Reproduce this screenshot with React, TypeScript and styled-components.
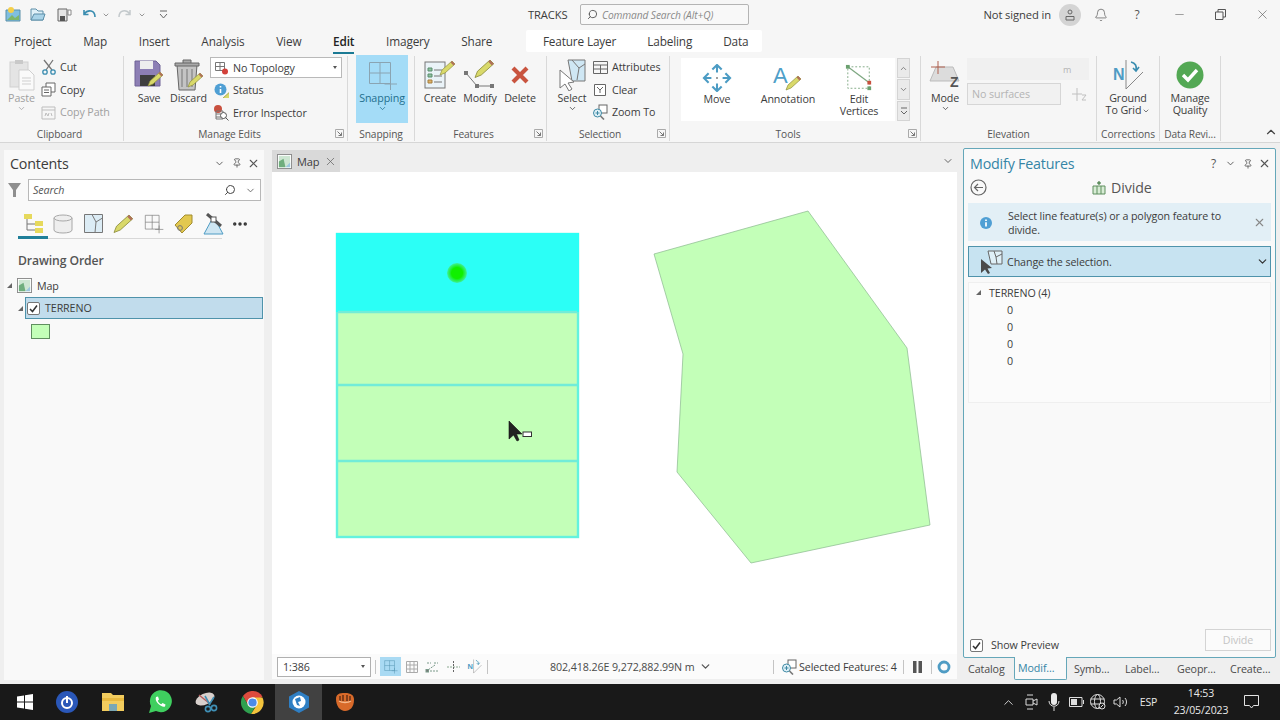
import React from "react"
import styled, { createGlobalStyle } from "styled-components"
import { ChevronDown, ChevronUp, X, Minus, Search, Bell, Pin, MoreHorizontal } from "lucide-react"

const GlobalStyle = createGlobalStyle`
  html, body { margin: 0; padding: 0; height: 100%; overflow: hidden; }
  body { font-family: "Open Sans", "Liberation Sans", sans-serif; color: #3c3c3c; }
  * { box-sizing: border-box; }
`

const Page = styled.div`
  width: 1280px;
  height: 720px;
  display: flex;
  flex-direction: column;
  background: #eeeeee;
  font-size: 10.7px;
  letter-spacing: -0.1px;
`

/* title bar */
const TitleBar = styled.div`
  height: 29px;
  flex: none;
  display: flex;
  align-items: center;
  background: #f6f6f6;
`
const Qat = styled.div`
  width: 528px;
  flex: none;
  display: flex;
  align-items: center;
  padding-left: 4px;
`
const QatButton = styled.span<{ $w?: number; $ml?: number }>`
  width: ${(p) => p.$w ?? 26}px;
  margin-left: ${(p) => p.$ml ?? 0}px;
  flex: none;
  display: flex;
  justify-content: center;
  align-items: center;
`
const AppName = styled.span`
  width: 52px;
  flex: none;
  font-size: 11.2px;
`
const CommandSearch = styled.div`
  width: 169px;
  height: 21px;
  flex: none;
  display: flex;
  align-items: center;
  gap: 4px;
  padding-left: 6px;
  border: 1px solid #b4b4b4;
  border-radius: 2px;
  background: #f8f8f8;
  font-size: 10.2px;
  font-style: italic;
  color: #8a8a8a;
`
const MirrorSearch = styled(Search)`
  transform: scaleX(-1);
  flex: none;
`
const SignIn = styled.span`
  margin-left: auto;
  font-size: 11.2px;
`
const Avatar = styled.span`
  width: 22px;
  height: 22px;
  flex: none;
  margin: 0 9px 0 8px;
  border-radius: 50%;
  background: #d4d4d4;
  display: flex;
  align-items: center;
  justify-content: center;
`
const TitleIcon = styled.span<{ $w: number }>`
  width: ${(p) => p.$w}px;
  flex: none;
  display: flex;
  justify-content: center;
  color: #555;
  font-size: 12px;
`

/* tabs */
const TabRow = styled.div`
  height: 26px;
  flex: none;
  display: flex;
  align-items: flex-end;
  padding: 0 0 4px 14px;
  gap: 31.7px;
  background: #f6f6f6;
  font-size: 11.8px;
  letter-spacing: -0.15px;
`
const MainTab = styled.span<{ $active?: boolean }>`
  position: relative;
  line-height: 20px;
  color: ${(p) => (p.$active ? "#222" : "#3c3c3c")};
  font-weight: ${(p) => (p.$active ? 600 : 400)};
  &::after {
    content: "";
    display: ${(p) => (p.$active ? "block" : "none")};
    position: absolute;
    left: 0;
    right: 0;
    bottom: -3px;
    height: 2.5px;
    background: #1b7a94;
  }
`
const ContextTabs = styled.div`
  height: 22px;
  margin: 0 0 -1px 2px;
  padding: 0 14px 0 17px;
  display: flex;
  align-items: center;
  gap: 31px;
  background: #ffffff;
  border-radius: 2px;
`

/* ribbon */
const Ribbon = styled.div`
  height: 88px;
  flex: none;
  display: flex;
  background: #f6f6f6;
  border-bottom: 1px solid #d6d6d6;
  position: relative;
`
const Group = styled.div<{ $w: number; $last?: boolean }>`
  width: ${(p) => p.$w}px;
  flex: none;
  display: flex;
  flex-direction: column;
  border-right: ${(p) => (p.$last ? "none" : "1px solid #d9d9d9")};
  margin: 1px 0 1px;
  position: relative;
`
const GroupBody = styled.div<{ $pad?: number }>`
  height: 70px;
  flex: none;
  display: flex;
  padding-left: ${(p) => p.$pad ?? 0}px;
`
const GroupLabel = styled.div<{ $pr?: number }>`
  flex: 1;
  display: flex;
  align-items: center;
  justify-content: center;
  padding-right: ${(p) => p.$pr ?? 0}px;
  font-size: 10.2px;
  color: #555;
`
const Launcher = styled.svg`
  position: absolute;
  right: 3px;
  bottom: 3px;
`
const LargeButton = styled.div<{ $w: number; $on?: boolean; $off?: boolean }>`
  width: ${(p) => p.$w}px;
  height: 68px;
  flex: none;
  display: flex;
  flex-direction: column;
  align-items: center;
  margin-top: ${(p) => (p.$on ? -1 : 0)}px;
  padding-top: ${(p) => (p.$on ? 3 : 2)}px;
  background: ${(p) => (p.$on ? "#a4dcf7" : "transparent")};
  color: ${(p) => (p.$off ? "#a0a0a0" : p.$on ? "#1f6f8e" : "#3c3c3c")};
  line-height: 12px;
  text-align: center;
`
const LargeIcon = styled.div`
  height: 33px;
  flex: none;
  display: flex;
  align-items: center;
  justify-content: center;
  margin-bottom: 1px;
`
const Stack = styled.div<{ $w: number; $ml?: number; $pt?: number }>`
  width: ${(p) => p.$w}px;
  margin-left: ${(p) => p.$ml ?? 0}px;
  padding-top: ${(p) => p.$pt ?? 0}px;
  flex: none;
  display: flex;
  flex-direction: column;
`
const SmallRow = styled.div<{ $off?: boolean; $pl?: number }>`
  height: 22.5px;
  display: flex;
  align-items: center;
  gap: 4px;
  padding-left: ${(p) => p.$pl ?? 0}px;
  color: ${(p) => (p.$off ? "#a0a0a0" : "#3c3c3c")};
  white-space: nowrap;
`
const IconSlot = styled.span`
  width: 16px;
  height: 16px;
  flex: none;
  display: flex;
  align-items: center;
  justify-content: center;
`
const Combo = styled.div`
  width: 132px;
  height: 21px;
  display: flex;
  align-items: center;
  gap: 4px;
  padding: 0 4px 0 3px;
  margin-bottom: 1px;
  background: #ffffff;
  border: 1px solid #b9b9b9;
`
const Caret = styled.span`
  margin-left: auto;
  width: 0;
  height: 0;
  border-left: 2.5px solid transparent;
  border-right: 2.5px solid transparent;
  border-top: 3px solid #555;
`
const Gallery = styled.div`
  width: 214px;
  height: 63px;
  margin: 2px 0 0 11px;
  flex: none;
  display: flex;
  background: #ffffff;
`
const GalleryItem = styled.div<{ $w: number }>`
  width: ${(p) => p.$w}px;
  flex: none;
  display: flex;
  flex-direction: column;
  align-items: center;
  padding-top: 5px;
  line-height: 11.5px;
  text-align: center;
  color: #3c3c3c;
`
const GalleryIcon = styled.div`
  height: 30px;
  flex: none;
  display: flex;
  align-items: center;
  justify-content: center;
  margin-bottom: 1px;
`
const GalleryScroll = styled.div`
  width: 13px;
  height: 63px;
  margin: 2px 0 0 2px;
  flex: none;
  display: flex;
  flex-direction: column;
  gap: 1px;
`
const ScrollStep = styled.div`
  flex: 1;
  display: flex;
  align-items: center;
  justify-content: center;
  background: #eaeaea;
  border: 1px solid #d4d4d4;
  color: #666;
`
const ElevationInputs = styled.div`
  margin-left: 2px;
  display: flex;
  flex-direction: column;
  gap: 3px;
  padding-top: 2px;
`
const DisabledInput = styled.div<{ $w: number; $border?: boolean }>`
  width: ${(p) => p.$w}px;
  height: 22px;
  display: flex;
  align-items: center;
  padding-left: 4px;
  background: ${(p) => (p.$border ? "#f1f1f1" : "#f0f0f0")};
  border: ${(p) => (p.$border ? "1px solid #d6d6d6" : "none")};
  color: #b4b4b4;
`
const UnitText = styled.span`
  margin-left: 92px;
  font-size: 9px;
`
const ElevRow = styled.div`
  display: flex;
  align-items: center;
  gap: 11px;
`
const InlineChevron = styled(ChevronDown)`
  vertical-align: -1px;
  margin-left: 1px;
`
const Collapse = styled.span`
  position: absolute;
  right: 2px;
  bottom: 0px;
  color: #444;
`

/* body */
const Main = styled.div`
  flex: 1;
  min-height: 0;
  display: flex;
  padding: 6px 4px 4px 4px;
  background: #efefef;
`
const ContentsPane = styled.div`
  width: 260px;
  margin-top: 1px;
  flex: none;
  display: flex;
  flex-direction: column;
  background: #f9f9f9;
`
const PaneHead = styled.div`
  height: 26px;
  flex: none;
  display: flex;
  align-items: center;
  padding: 3px 2px 0 6px;
`
const ContentsHead = styled(PaneHead)`
  height: 25px;
  padding-top: 1px;
`
const PaneTitle = styled.span<{ $blue?: boolean }>`
  flex: 1;
  font-size: 14.3px;
  letter-spacing: -0.2px;
  color: ${(p) => (p.$blue ? "#3585a6" : "#3c3c3c")};
`
const HeadIcon = styled.span`
  width: 17px;
  flex: none;
  display: flex;
  justify-content: center;
  color: #555;
  font-size: 12px;
`
const SearchRow = styled.div`
  display: flex;
  align-items: center;
  padding: 4px 3px 0 3px;
  gap: 6px;
`
const SearchBox = styled.div`
  flex: 1;
  height: 22px;
  display: flex;
  align-items: center;
  padding: 0 4px;
  background: #fff;
  border: 1px solid #b8b8b8;
  font-style: italic;
  color: #555;
`
const SearchText = styled.span`
  flex: 1;
`
const SearchChevron = styled(ChevronDown)`
  margin-left: 9px;
`
const ViewTabs = styled.div`
  margin: 8px 0 0 14px;
  width: 204px;
  height: 30px;
  flex: none;
  display: flex;
  align-items: center;
  border-bottom: 1px solid #d8d8d8;
  position: relative;
  &::after {
    content: "";
    position: absolute;
    left: 0;
    bottom: -1px;
    width: 30px;
    height: 3px;
    background: #1f7f99;
  }
`
const ViewTab = styled.span<{ $w?: number }>`
  width: ${(p) => p.$w ?? 30}px;
  flex: none;
  display: flex;
  justify-content: center;
`
const SectionTitle = styled.div`
  margin: 13px 0 0 14px;
  font-size: 12.2px;
  font-weight: 600;
  color: #555;
`
const LayerBox = styled.div`
  flex: 1;
  height: 22px;
  display: flex;
  align-items: center;
  gap: 5px;
  padding-left: 1px;
  background: #c1dcec;
  border: 1px solid #4f93ab;
`
const TreeArrow = styled.span`
  width: 0;
  height: 0;
  flex: none;
  border-left: 5px solid transparent;
  border-bottom: 5px solid #666;
`
const MapTreeRow = styled.div`
  display: flex;
  align-items: center;
  margin-top: 9px;
  padding-left: 3px;
  gap: 5px;
`
const LayerRow = styled.div`
  display: flex;
  align-items: center;
  padding: 0 1px 0 14px;
  gap: 2px;
  margin-top: 4px;
`
const Check = styled.span`
  width: 13px;
  height: 13px;
  flex: none;
  display: flex;
  align-items: center;
  justify-content: center;
  background: #fff;
  border: 1px solid #777;
  border-radius: 2px;
`
const Swatch = styled.div`
  width: 19px;
  height: 15px;
  margin: 5px 0 0 27px;
  background: #c3ffb8;
  border: 1px solid #5f8f5f;
`

const MapPane = styled.div`
  width: 685px;
  margin: 1px 0 0 8px;
  flex: none;
  display: flex;
  flex-direction: column;
`
const MapTabs = styled.div`
  height: 22px;
  flex: none;
  display: flex;
  align-items: center;
  justify-content: space-between;
  padding-right: 3px;
`
const MapTab = styled.div`
  height: 22px;
  padding: 0 3px 0 5px;
  display: flex;
  align-items: center;
  gap: 5px;
  background: #d9d9d9;
  font-size: 11px;
`
const Canvas = styled.div`
  height: 482px;
  flex: none;
  background: #ffffff;
  display: flex;
`
const StatusBar = styled.div`
  height: 25px;
  flex: none;
  display: flex;
  align-items: center;
  padding-left: 5px;
  background: #fbfbfb;
`
const ScaleBox = styled.div`
  width: 94px;
  height: 20px;
  flex: none;
  display: flex;
  align-items: center;
  padding: 0 5px;
  background: #fff;
  border: 1px solid #b0b0b0;
`
const Sep = styled.span<{ $l: number; $r: number }>`
  width: 1px;
  height: 14px;
  flex: none;
  margin: 0 ${(p) => p.$r}px 0 ${(p) => p.$l}px;
  background: #c4c4c4;
`
const StatusIcon = styled.span<{ $on?: boolean }>`
  width: 21px;
  height: 19px;
  flex: none;
  display: flex;
  align-items: center;
  justify-content: center;
  background: ${(p) => (p.$on ? "#a9daf3" : "transparent")};
`
const Coords = styled.span`
  margin-left: 60px;
  width: 141px;
  flex: none;
  white-space: nowrap;
  color: #4a4a4a;
`
const CoordChevron = styled(ChevronDown)`
  margin-left: 8px;
  flex: none;
`
const SelectedText = styled.span`
  width: 99px;
  margin-left: 2px;
  flex: none;
  white-space: nowrap;
`

const ModifyColumn = styled.div`
  width: 313px;
  margin: -1px 0 0 6px;
  flex: none;
  display: flex;
  flex-direction: column;
`
const ModifyPane = styled.div`
  height: 510px;
  flex: none;
  display: flex;
  flex-direction: column;
  background: #f9f9f9;
  border: 1px solid #65a7b9;
  border-radius: 2px;
`
const BackRow = styled.div`
  height: 23px;
  flex: none;
  display: flex;
  align-items: center;
  padding: 2px 0 0 6px;
`
const DivideTitle = styled.div`
  margin-left: 105px;
  display: flex;
  align-items: center;
  gap: 5px;
  font-size: 14.2px;
  color: #555;
`
const InfoBar = styled.div`
  margin: 5px 4px 0 4px;
  height: 38px;
  flex: none;
  display: flex;
  align-items: center;
  padding: 1px 5px 0 12px;
  background: #e2eff6;
  line-height: 14px;
`
const InfoText = styled.span`
  width: 235px;
  margin-left: 16px;
  flex: none;
`
const InfoClose = styled.span`
  margin-left: auto;
  color: #888;
  display: flex;
`
const SelectBar = styled.div`
  margin: 5px 4px 0 4px;
  height: 31px;
  flex: none;
  display: flex;
  align-items: center;
  padding: 0 1px 0 10px;
  gap: 4px;
  background: #c7e3f1;
  border: 1px solid #4f93ab;
`
const SelectText = styled.span`
  flex: 1;
`
const FeatureList = styled.div`
  margin: 5px 4px 0 4px;
  height: 121px;
  flex: none;
  padding: 1px 0 0 7px;
  background: #fbfbfb;
  border: 1px solid #efefef;
`
const ListRow = styled.div<{ $child?: boolean }>`
  height: 17px;
  display: flex;
  align-items: center;
  gap: 8px;
  padding-left: ${(p) => (p.$child ? 31 : 0)}px;
`
const Footer = styled.div`
  margin-top: auto;
  height: 28px;
  flex: none;
  display: flex;
  align-items: flex-start;
  padding: 0 4px 0 6px;
`
const PreviewRow = styled.div`
  margin-top: 9px;
  display: flex;
  align-items: center;
  gap: 8px;
`
const DivideButton = styled.div`
  margin-left: auto;
  width: 66px;
  height: 22px;
  display: flex;
  align-items: center;
  justify-content: center;
  background: #fbfbfb;
  border: 1px solid #d4d4d4;
  color: #c4c4c4;
`
const DockTabs = styled.div`
  height: 22px;
  flex: none;
  display: flex;
  align-items: stretch;
  padding-left: 5px;
`
const DockTab = styled.span<{ $w: number; $active?: boolean; $pl?: number }>`
  width: ${(p) => p.$w}px;
  flex: none;
  display: flex;
  align-items: center;
  color: ${(p) => (p.$active ? "#3585a6" : "#4a4a4a")};
  padding-left: ${(p) => p.$pl ?? 0}px;
  margin-top: -1px;
  background: ${(p) => (p.$active ? "#f9f9f9" : "transparent")};
  border: ${(p) => (p.$active ? "1px solid #65a7b9" : "none")};
  border-top: none;
  border-radius: 0 0 2px 2px;
`

/* taskbar */
const Taskbar = styled.div`
  height: 36px;
  flex: none;
  display: flex;
  align-items: stretch;
  background: #191919;
  color: #e8e8e8;
`
const StartButton = styled.div`
  width: 44px;
  flex: none;
  display: flex;
  align-items: center;
  justify-content: center;
  padding-left: 6px;
`
const TaskIcon = styled.div<{ $active?: boolean }>`
  width: 46.3px;
  flex: none;
  display: flex;
  align-items: center;
  justify-content: center;
  background: ${(p) => (p.$active ? "#414141" : "transparent")};
`
const Tray = styled.div`
  margin-left: auto;
  display: flex;
  align-items: center;
`
const TrayIcon = styled.span`
  width: 22.4px;
  flex: none;
  display: flex;
  justify-content: center;
  color: #e4e4e4;
`
const Lang = styled.span`
  width: 33px;
  text-align: center;
  font-size: 10.5px;
`
const Clock = styled.div`
  width: 70px;
  margin-left: 1px;
  text-align: center;
  font-size: 10.5px;
  line-height: 17px;
`
const NotifyIcon = styled.span`
  width: 44px;
  display: flex;
  justify-content: center;
  padding-right: 14px;
`

/* small drawings */
const Pencil = ({ x = 0, y = 0 }: { x?: number; y?: number }) => (
  <g transform={`translate(${x} ${y})`}>
    <path d="M0 14 L2 9 L12 0 L15 3 L5 12 Z" fill="#d9d96a" stroke="#8f8f3e" strokeWidth=".7" />
    <path d="M12 0 L15 3 L13.5 4.4 L10.6 1.4 Z" fill="#b0705a" />
  </g>
)
const MapGlyph = ({ s = 16 }: { s?: number }) => (
  <svg width={s} height={s} viewBox="0 0 16 16">
    <rect x=".5" y=".5" width="15" height="15" fill="#fff" stroke="#8a8a8a" />
    <rect x="2" y="2" width="12" height="12" fill="#cde6d2" />
    <path d="M2 8 L7 5 L9 14 H2 Z" fill="#6fae7d" />
    <path d="M9 14 L14 9 V14 Z" fill="#9cc7de" />
  </svg>
)
const SelectGlyph = () => (
  <svg width="30" height="32" viewBox="0 0 30 32">
    <path d="M11 1 H28 V22 H15 Z" fill="#cfe7f4" stroke="#777" />
    <path d="M15 1 L22 9 L20 21 M28 5 L22 9" fill="none" stroke="#777" />
    <path d="M3 11 L3 29 L8 25 L12 32 L15 30 L11 24 L17 23 Z" fill="#fff" stroke="#777" />
  </svg>
)
const ZoomToGlyph = () => (
  <svg width="16" height="16" viewBox="0 0 16 16">
    <rect x="7" y="1" width="8" height="8" fill="#fff" stroke="#666" />
    <circle cx="5.5" cy="9" r="4" fill="#dff0f7" stroke="#3f8aa5" />
    <path d="M3.5 9 H7.5 M5.5 7 V11" stroke="#3f8aa5" />
    <path d="M8.5 12 L12 15.5" stroke="#777" strokeWidth="1.6" />
  </svg>
)
const SnapGlyph = ({ s = 32, c = "#8aa4b2" }: { s?: number; c?: string }) => (
  <svg width={s} height={s} viewBox="0 0 32 32" fill="none" stroke={c} strokeWidth="1">
    <path d="M3.5 3.5 H24.5 V24.5 H3.5 Z M14 3.5 V24.5 M3.5 14 H24.5" />
    <path d="M24.5 19 V31 M18.5 25 H31" />
  </svg>
)
const GroundGlyph = ({ s = 32 }: { s?: number }) => (
  <svg width={s} height={s} viewBox="0 0 32 32" fill="none">
    <path d="M14 1 V30 L31 13" stroke="#888" />
    <text x="1" y="21" fontFamily="Liberation Sans, sans-serif" fontWeight="700" fontSize="16" fill="#4f9cc4">N</text>
    <path d="M19 3 C23 4 25 7 24 11 M21 9 L24 12 L27 8" stroke="#3a8db0" strokeWidth="1.6" />
  </svg>
)
const Check2 = () => (
  <svg width="9" height="9" viewBox="0 0 9 9">
    <path d="M1 5 L3.5 7.5 L8 1.5" stroke="#333" strokeWidth="1.5" fill="none" />
  </svg>
)
const Launch = () => (
  <Launcher width="9" height="9" viewBox="0 0 9 9" fill="none" stroke="#777">
    <path d="M.5 8.5 V.5 H8.5 V8.5 Z" stroke="#aaa" />
    <path d="M2.5 2.5 L6.5 6.5 M6.5 3.5 V6.5 H3.5" />
  </Launcher>
)

const App = () => (
  <Page>
    <GlobalStyle />
    <TitleBar>
      <Qat>
        <QatButton $w={17}>
          <svg width="16" height="15" viewBox="0 0 16 15">
            <path d="M1 3 H15 V14 H1 Z" fill="#7fbfe0" stroke="#5a8fa8" />
            <path d="M2 13 L7 8 L10 11 L14 8 V13 Z" fill="#7eb76a" />
            <circle cx="6" cy="3" r="3" fill="#f4cf4a" />
          </svg>
        </QatButton>
        <QatButton $w={26} $ml={4}>
          <svg width="16" height="13" viewBox="0 0 16 13">
            <path d="M1 12 V1 H6 L8 3 H13 V12 Z" fill="#dff0f8" stroke="#5c8ea8" />
            <path d="M1 12 L4 6 H15 L13 12 Z" fill="#a9d3e8" stroke="#5c8ea8" />
          </svg>
        </QatButton>
        <QatButton $w={26}>
          <svg width="15" height="14" viewBox="0 0 15 14">
            <path d="M1 1 H10 V13 H1 Z" fill="#e6e6e6" stroke="#666" />
            <rect x="3" y="8" width="5" height="5" fill="#555" />
            <path d="M11 2 H14 V7 H11 Z" fill="#fff" stroke="#888" />
          </svg>
        </QatButton>
        <QatButton $w={25}>
          <svg width="14" height="12" viewBox="0 0 14 12" fill="none" stroke="#3a8db0" strokeWidth="1.6">
            <path d="M1 5 C5 0 12 1 12 8 M1 1 V5.5 H5.5" />
          </svg>
        </QatButton>
        <QatButton $w={8}><ChevronDown size={8} color="#666" /></QatButton>
        <QatButton $w={28}>
          <svg width="14" height="12" viewBox="0 0 14 12" fill="none" stroke="#c3c9cc" strokeWidth="1.5">
            <path d="M13 5 C9 0 2 1 2 8 M13 1 V5.5 H8.5" />
          </svg>
        </QatButton>
        <QatButton $w={8}><ChevronDown size={8} color="#666" /></QatButton>
        <QatButton $w={34}>
          <svg width="9" height="9" viewBox="0 0 9 9" fill="none" stroke="#666">
            <path d="M1 1 H8 M1 4 L4.5 8 L8 4" />
          </svg>
        </QatButton>
      </Qat>
      <AppName>TRACKS</AppName>
      <CommandSearch>
        <MirrorSearch size={11} color="#555" />
        Command Search (Alt+Q)
      </CommandSearch>
      <SignIn>Not signed in</SignIn>
      <Avatar>
        <svg width="10" height="12" viewBox="0 0 10 12" fill="none" stroke="#666">
          <circle cx="5" cy="3" r="2" />
          <path d="M1 11 V7.5 H9 V11 Z" />
        </svg>
      </Avatar>
      <TitleIcon $w={22}><Bell size={14} strokeWidth={1.2} /></TitleIcon>
      <TitleIcon $w={50}>?</TitleIcon>
      <TitleIcon $w={34}><Minus size={13} strokeWidth={1} /></TitleIcon>
      <TitleIcon $w={48}>
        <svg width="11" height="11" viewBox="0 0 11 11" fill="none" stroke="#555">
          <path d="M.5 3 H8 V10.5 H.5 Z M3 3 V.5 H10.5 V8 H8" />
        </svg>
      </TitleIcon>
      <TitleIcon $w={36}><X size={15} strokeWidth={1} /></TitleIcon>
    </TitleBar>

    <TabRow>
      <MainTab>Project</MainTab>
      <MainTab>Map</MainTab>
      <MainTab>Insert</MainTab>
      <MainTab>Analysis</MainTab>
      <MainTab>View</MainTab>
      <MainTab $active>Edit</MainTab>
      <MainTab>Imagery</MainTab>
      <MainTab>Share</MainTab>
      <ContextTabs>
        <MainTab>Feature Layer</MainTab>
        <MainTab>Labeling</MainTab>
        <MainTab>Data</MainTab>
      </ContextTabs>
    </TabRow>

    <Ribbon>
      <Group $w={124}>
        <GroupBody $pad={3}>
          <LargeButton $w={37} $off>
            <LargeIcon>
              <svg width="26" height="32" viewBox="0 0 26 32">
                <rect x="1" y="3" width="18" height="25" fill="#e4e4e4" stroke="#d0d0d0" />
                <rect x="6" y="1" width="8" height="4" fill="#c9c9c9" />
                <path d="M10 11 H20 L25 16 V31 H10 Z" fill="#fafafa" stroke="#cfcfcf" />
                <path d="M13 19 H22 M13 22 H22 M13 25 H22" stroke="#cfcfcf" />
              </svg>
            </LargeIcon>
            Paste
            <ChevronDown size={9} />
          </LargeButton>
          <Stack $w={80}>
            <SmallRow>
              <IconSlot>
                <svg width="15" height="16" viewBox="0 0 15 16" fill="none">
                  <path d="M3 1 L11 11 M12 1 L5 11" stroke="#777" strokeWidth="1.3" />
                  <circle cx="4" cy="13" r="2.2" stroke="#3b8db0" strokeWidth="1.3" />
                  <circle cx="12" cy="13" r="2.2" stroke="#3b8db0" strokeWidth="1.3" />
                </svg>
              </IconSlot>
              Cut
            </SmallRow>
            <SmallRow>
              <IconSlot>
                <svg width="15" height="15" viewBox="0 0 15 15" fill="#fff" stroke="#666">
                  <path d="M5 1 H14 V10 H5 Z" />
                  <path d="M1 5 H10 V14 H1 Z" />
                  <path d="M3 8 H8 M3 10.5 H8" />
                </svg>
              </IconSlot>
              Copy
            </SmallRow>
            <SmallRow $off>
              <IconSlot>
                <svg width="15" height="15" viewBox="0 0 15 15" fill="none" stroke="#bdbdbd">
                  <path d="M1 2 H14 V14 H1 Z M1 5 H14" />
                  <path d="M4 11 L5 8 L7 11 L8 8 M10 8 L11 11" />
                </svg>
              </IconSlot>
              Copy Path
            </SmallRow>
          </Stack>
        </GroupBody>
        <GroupLabel $pr={4}>Clipboard</GroupLabel>
      </Group>

      <Group $w={224}>
        <GroupBody $pad={6}>
          <LargeButton $w={38}>
            <LargeIcon>
              <svg width="30" height="30" viewBox="0 0 30 30">
                <path d="M1 1 H22 L26 5 V26 H1 Z" fill="#8d7fb5" stroke="#6f6396" />
                <rect x="6" y="1" width="13" height="8" fill="#eeeeee" />
                <rect x="6" y="15" width="15" height="11" fill="#3f3f3f" />
                <Pencil x={14} y={12} />
              </svg>
            </LargeIcon>
            Save
          </LargeButton>
          <LargeButton $w={41}>
            <LargeIcon>
              <svg width="30" height="32" viewBox="0 0 30 32">
                <path d="M3 6 H23 L21 31 H5 Z" fill="#c4c4c4" stroke="#666" />
                <path d="M1 4 H25 V7 H1 Z M9 4 V1 H17 V4" fill="#a9a9a9" stroke="#666" />
                <path d="M8 10 V28 M13 10 V28 M18 10 V28" stroke="#777" />
                <Pencil x={14} y={14} />
              </svg>
            </LargeIcon>
            Discard
          </LargeButton>
          <Stack $w={136} $ml={1} $pt={1}>
            <Combo>
              <svg width="15" height="14" viewBox="0 0 15 14" fill="none">
                <path d="M1.5 1.5 H10.5 V9.5 H1.5 Z M6 1.5 V9.5 M1.5 5.5 H10.5" stroke="#777" />
                <circle cx="11" cy="10.5" r="3" fill="#d3413a" />
              </svg>
              No Topology
              <Caret />
            </Combo>
            <SmallRow $pl={3}>
              <IconSlot>
                <svg width="15" height="15" viewBox="0 0 15 15">
                  <circle cx="6.5" cy="6.5" r="6" fill="#4f9fd4" />
                  <path d="M6.5 3 V4.5 M6.5 6 V10" stroke="#fff" strokeWidth="1.6" />
                  <Pencil x={7} y={6} />
                </svg>
              </IconSlot>
              Status
            </SmallRow>
            <SmallRow $pl={3}>
              <IconSlot>
                <svg width="16" height="16" viewBox="0 0 16 16" fill="none">
                  <circle cx="5" cy="4" r="4" fill="#c8503e" />
                  <path d="M3 6 H10 V14 H3 Z M3 9 H10 M3 12 H8" stroke="#777" />
                  <circle cx="10.5" cy="10.5" r="3" fill="#fff" stroke="#555" />
                  <path d="M12.5 12.5 L15.5 15.5" stroke="#555" />
                </svg>
              </IconSlot>
              Error Inspector
            </SmallRow>
          </Stack>
        </GroupBody>
        <GroupLabel $pr={12}>Manage Edits</GroupLabel>
        <Launch />
      </Group>

      <Group $w={67}>
        <GroupBody $pad={8}>
          <LargeButton $w={52} $on>
            <LargeIcon>
              <SnapGlyph />
            </LargeIcon>
            Snapping
            <ChevronDown size={9} />
          </LargeButton>
        </GroupBody>
        <GroupLabel>Snapping</GroupLabel>
      </Group>

      <Group $w={132}>
        <GroupBody $pad={5}>
          <LargeButton $w={40}>
            <LargeIcon>
              <svg width="32" height="30" viewBox="0 0 32 30">
                <rect x="1" y="2" width="20" height="26" fill="#eaf3f8" stroke="#777" />
                <path d="M4 8 H8 V11 H4 Z M4 14 H8 V17 H4 Z" fill="#8ec2a0" stroke="#5b8d6c" />
                <path d="M4 20 H8 V23 H4 Z" fill="#e0b26a" stroke="#a57f3d" />
                <path d="M10 10 H18 M10 16 H18 M10 22 H18" stroke="#777" />
                <Pencil x={16} y={1} />
              </svg>
            </LargeIcon>
            Create
          </LargeButton>
          <LargeButton $w={40}>
            <LargeIcon>
              <svg width="32" height="30" viewBox="0 0 32 30" fill="none">
                <path d="M2 13 L13 26 H28" stroke="#777" />
                <rect x="0" y="11" width="4" height="4" fill="#777" />
                <rect x="11" y="24" width="4" height="4" fill="#777" />
                <rect x="26" y="24" width="4" height="4" fill="#777" />
                <g transform="translate(11 0) scale(1.25)"><Pencil /></g>
              </svg>
            </LargeIcon>
            Modify
          </LargeButton>
          <LargeButton $w={40}>
            <LargeIcon>
              <svg width="20" height="20" viewBox="0 0 20 20">
                <path d="M3 3 L17 17 M17 3 L3 17" stroke="#c9543f" strokeWidth="4.2" />
              </svg>
            </LargeIcon>
            Delete
          </LargeButton>
        </GroupBody>
        <GroupLabel $pr={14}>Features</GroupLabel>
        <Launch />
      </Group>

      <Group $w={123}>
        <GroupBody $pad={5}>
          <LargeButton $w={40}>
            <LargeIcon>
              <SelectGlyph />
            </LargeIcon>
            Select
            <ChevronDown size={9} />
          </LargeButton>
          <Stack $w={76}>
            <SmallRow>
              <IconSlot>
                <svg width="15" height="13" viewBox="0 0 15 13" fill="none" stroke="#666">
                  <path d="M.5 .5 H14.5 V12.5 H.5 Z M.5 4 H14.5 M.5 8 H14.5 M7.5 4 V12.5" />
                </svg>
              </IconSlot>
              Attributes
            </SmallRow>
            <SmallRow>
              <IconSlot>
                <svg width="12" height="12" viewBox="0 0 12 12" fill="#fff" stroke="#666">
                  <path d="M.5 .5 H11.5 V11.5 H.5 Z" />
                  <path d="M3 3 L6 6 L6 9 M9 3 L6 6" fill="none" />
                </svg>
              </IconSlot>
              Clear
            </SmallRow>
            <SmallRow>
              <IconSlot>
                <ZoomToGlyph />
              </IconSlot>
              Zoom To
            </SmallRow>
          </Stack>
        </GroupBody>
        <GroupLabel $pr={16}>Selection</GroupLabel>
        <Launch />
      </Group>

      <Group $w={251}>
        <GroupBody>
          <Gallery>
            <GalleryItem $w={72}>
              <GalleryIcon>
                <svg width="30" height="28" viewBox="0 0 30 30" fill="none" stroke="#4c9cc4" strokeWidth="2.2">
                  <path d="M15 2 V9 M15 21 V28 M2 15 H9 M21 15 H28" />
                  <path d="M10 6 L15 1 L20 6 M10 24 L15 29 L20 24 M6 10 L1 15 L6 20 M24 10 L29 15 L24 20" />
                  <circle cx="15" cy="15" r="1" fill="#777" stroke="none" />
                </svg>
              </GalleryIcon>
              Move
            </GalleryItem>
            <GalleryItem $w={70}>
              <GalleryIcon>
                <svg width="32" height="30" viewBox="0 0 32 30" fill="none">
                  <text x="1" y="20" fontFamily="Liberation Sans, sans-serif" fontSize="22" fill="#4f9fc9">A</text>
                  <g transform="translate(14 13)"><Pencil /></g>
                </svg>
              </GalleryIcon>
              Annotation
            </GalleryItem>
            <GalleryItem $w={72}>
              <GalleryIcon>
                <svg width="28" height="28" viewBox="0 0 28 30" fill="none">
                  <path d="M2 3 H25 V26 H2 Z" stroke="#7fa882" strokeDasharray="2 2" />
                  <path d="M2 3 L25 20" stroke="#7fa882" strokeWidth="1.4" />
                  <rect x="0" y="1" width="4" height="4" fill="#6aa06f" />
                  <rect x="23" y="18" width="4" height="4" fill="#c8503e" />
                  <rect x="23" y="24" width="4" height="4" fill="#6aa06f" />
                </svg>
              </GalleryIcon>
              Edit
              <br />
              Vertices
            </GalleryItem>
          </Gallery>
          <GalleryScroll>
            <ScrollStep><ChevronUp size={9} /></ScrollStep>
            <ScrollStep><ChevronDown size={9} /></ScrollStep>
            <ScrollStep>
              <svg width="8" height="8" viewBox="0 0 8 8" fill="none" stroke="#666">
                <path d="M1 1 H7 M1 4 L4 7 L7 4" />
              </svg>
            </ScrollStep>
          </GalleryScroll>
        </GroupBody>
        <GroupLabel $pr={14}>Tools</GroupLabel>
        <Launch />
      </Group>

      <Group $w={176}>
        <GroupBody $pad={4}>
          <LargeButton $w={40}>
            <LargeIcon>
              <svg width="32" height="30" viewBox="0 0 32 30" fill="none">
                <path d="M1 21 L7 7 H24 L30 21 Z" fill="#dcdcdc" stroke="#bbb" />
                <path d="M9 1 V14 M2 7 H16" stroke="#b0604e" />
                <text x="21" y="27" fontFamily="Liberation Sans, sans-serif" fontWeight="700" fontSize="14" fill="#555">Z</text>
              </svg>
            </LargeIcon>
            Mode
            <ChevronDown size={9} />
          </LargeButton>
          <ElevationInputs>
            <DisabledInput $w={122}>
              <UnitText>m</UnitText>
            </DisabledInput>
            <ElevRow>
              <DisabledInput $w={94} $border>No surfaces</DisabledInput>
              <svg width="15" height="15" viewBox="0 0 15 15" fill="none" stroke="#c0c0c0">
                <path d="M5 1 V14 M0 7 H10" />
                <path d="M10 8 H14 L10 13 H14" />
              </svg>
            </ElevRow>
          </ElevationInputs>
        </GroupBody>
        <GroupLabel>Elevation</GroupLabel>
      </Group>

      <Group $w={63}>
        <GroupBody>
          <LargeButton $w={62}>
            <LargeIcon>
              <GroundGlyph />
            </LargeIcon>
            Ground
            <span>
              To Grid
              <InlineChevron size={8} />
            </span>
          </LargeButton>
        </GroupBody>
        <GroupLabel>Corrections</GroupLabel>
      </Group>

      <Group $w={61}>
        <GroupBody>
          <LargeButton $w={60}>
            <LargeIcon>
              <svg width="28" height="28" viewBox="0 0 28 28">
                <circle cx="14" cy="14" r="13.5" fill="#53a854" />
                <path d="M7 14 L12 19 L21 9" stroke="#fff" strokeWidth="3.4" fill="none" />
              </svg>
            </LargeIcon>
            Manage
            <br />
            Quality
          </LargeButton>
        </GroupBody>
        <GroupLabel>Data Revi...</GroupLabel>
      </Group>
      <Collapse><ChevronUp size={14} /></Collapse>
    </Ribbon>

    <Main>
      <ContentsPane>
        <ContentsHead>
          <PaneTitle>Contents</PaneTitle>
          <HeadIcon><ChevronDown size={11} /></HeadIcon>
          <HeadIcon><Pin size={10} /></HeadIcon>
          <HeadIcon><X size={13} /></HeadIcon>
        </ContentsHead>
        <SearchRow>
          <svg width="15" height="16" viewBox="0 0 15 16">
            <path d="M1 1 H14 L9 8 V15 H6 V8 Z" fill="#8f8f8f" />
          </svg>
          <SearchBox>
            <SearchText>Search</SearchText>
            <MirrorSearch size={12} color="#444" />
            <SearchChevron size={11} color="#666" />
          </SearchBox>
        </SearchRow>
        <ViewTabs>
          <ViewTab>
            <svg width="21" height="21" viewBox="0 0 21 21" fill="none">
              <path d="M4 6 V17 H12 M4 11 H12" stroke="#777" />
              <rect x="1" y="1" width="8" height="5" fill="#e6d95c" />
              <rect x="12" y="8" width="8" height="5" fill="#e6d95c" />
              <rect x="12" y="15" width="8" height="5" fill="#e6d95c" />
            </svg>
          </ViewTab>
          <ViewTab>
            <svg width="20" height="20" viewBox="0 0 20 20" fill="#eee" stroke="#a8a8a8">
              <path d="M1 4 V16 C1 20 19 20 19 16 V4 Z" />
              <ellipse cx="10" cy="4" rx="9" ry="3" />
            </svg>
          </ViewTab>
          <ViewTab>
            <svg width="19" height="19" viewBox="0 0 19 19" fill="#dcecf5" stroke="#777">
              <path d="M.5 .5 H18.5 V18.5 H.5 Z" />
              <path d="M8 .5 L12 8 L11 18.5 M18.5 4 L12 8" fill="none" />
            </svg>
          </ViewTab>
          <ViewTab>
            <svg width="20" height="20" viewBox="0 0 20 20">
              <g transform="translate(1 1) scale(1.25)"><Pencil /></g>
            </svg>
          </ViewTab>
          <ViewTab>
            <SnapGlyph s={21} c="#777" />
          </ViewTab>
          <ViewTab>
            <svg width="21" height="21" viewBox="0 0 21 21">
              <path d="M2 12 L12 2 H19 V10 L9 20 Z" fill="#e2c84f" stroke="#a18c30" />
              <circle cx="7" cy="15" r="2.4" fill="none" stroke="#777" />
            </svg>
          </ViewTab>
          <ViewTab>
            <svg width="21" height="22" viewBox="0 0 21 22" fill="none">
              <path d="M1 21 L8 8 H13 L20 21 Z" fill="#cfe6f2" stroke="#4f9cc4" />
              <path d="M4 1 L18 13" stroke="#555" strokeWidth="3" />
              <rect x="8" y="4" width="5" height="5" fill="#fff" stroke="#555" />
            </svg>
          </ViewTab>
          <ViewTab $w={24}><MoreHorizontal size={18} strokeWidth={2.6} color="#333" /></ViewTab>
        </ViewTabs>
        <SectionTitle>Drawing Order</SectionTitle>
        <MapTreeRow>
          <TreeArrow />
          <MapGlyph s={15} />
          Map
        </MapTreeRow>
        <LayerRow>
          <TreeArrow />
          <LayerBox>
            <Check><Check2 /></Check>
            TERRENO
          </LayerBox>
        </LayerRow>
        <Swatch />
      </ContentsPane>

      <MapPane>
        <MapTabs>
          <MapTab>
            <MapGlyph s={15} />
            Map
            <X size={13} strokeWidth={1.4} color="#666" />
          </MapTab>
          <ChevronDown size={12} color="#666" />
        </MapTabs>
        <Canvas>
          <svg width="685" height="482" viewBox="272 172 685 482">
            <rect x="337" y="234" width="241" height="303" fill="#c3ffb8" stroke="#63f2de" strokeWidth="2.4" />
            <rect x="336" y="233" width="243" height="79" fill="#2bfff6" />
            <path d="M338 312 H577 M338 385 H577 M338 461 H577" stroke="#72ecd8" strokeWidth="2.6" />
            <defs>
              <radialGradient id="dot">
                <stop offset="55%" stopColor="#10f000" />
                <stop offset="100%" stopColor="#40f0a0" />
              </radialGradient>
            </defs>
            <circle cx="457" cy="273" r="10" fill="url(#dot)" />
            <path d="M654 254 L808 211 L907 348 L930 525 L751 563 L677 472 L683 354 Z" fill="#c3ffb8" stroke="#8ab88e" strokeWidth=".7" />
            <path d="M509 421 V439 L513.5 435 L517 441 L519 440 L516.5 434 H522 Z" fill="#222" stroke="#111" strokeWidth=".6" />
            <rect x="523" y="432" width="8.5" height="4.5" fill="#fff" stroke="#333" />
          </svg>
        </Canvas>
        <StatusBar>
          <ScaleBox>
            1:386
            <Caret />
          </ScaleBox>
          <Sep $l={4} $r={4} />
          <StatusIcon $on><SnapGlyph s={15} c="#4f8fae" /></StatusIcon>
          <StatusIcon>
            <svg width="12" height="12" viewBox="0 0 12 12" fill="none" stroke="#aaa">
              <path d="M.5 .5 H11.5 V11.5 H.5 Z M4 .5 V11.5 M8 .5 V11.5 M.5 4 H11.5 M.5 8 H11.5" />
            </svg>
          </StatusIcon>
          <StatusIcon>
            <svg width="16" height="14" viewBox="0 0 16 14" fill="none" stroke="#7a9a8a">
              <path d="M2 3 H6 M9 3 H13 M2 11 L14 11 M10 5 L3 10" strokeDasharray="2 1" />
              <rect x="1" y="9.5" width="2.5" height="2.5" fill="#777" />
            </svg>
          </StatusIcon>
          <StatusIcon>
            <svg width="15" height="14" viewBox="0 0 15 14" fill="none" stroke="#8aa88f">
              <path d="M1 7 H14" strokeDasharray="2 1" />
              <path d="M7.5 1 V13" stroke="#666" strokeDasharray="2 1" />
            </svg>
          </StatusIcon>
          <StatusIcon><GroundGlyph s={15} /></StatusIcon>
          <Sep $l={2} $r={2} />
          <Coords>802,418.26E 9,272,882.99N m</Coords>
          <CoordChevron size={13} strokeWidth={2.4} color="#555" />
          <Sep $l={61} $r={7} />
          <ZoomToGlyph />
          <SelectedText>Selected Features: 4</SelectedText>
          <Sep $l={5} $r={8} />
          <svg width="11" height="12" viewBox="0 0 11 12">
            <path d="M1 0 H4.5 V12 H1 Z M6.5 0 H10 V12 H6.5 Z" fill="#555" />
          </svg>
          <Sep $l={8} $r={5} />
          <svg width="14" height="14" viewBox="0 0 14 14">
            <circle cx="7" cy="7" r="5" fill="none" stroke="#4f9cc4" strokeWidth="2.8" />
          </svg>
        </StatusBar>
      </MapPane>

      <ModifyColumn>
        <ModifyPane>
          <PaneHead>
            <PaneTitle $blue>Modify Features</PaneTitle>
            <HeadIcon>?</HeadIcon>
            <HeadIcon><ChevronDown size={11} /></HeadIcon>
            <HeadIcon><Pin size={10} /></HeadIcon>
            <HeadIcon><X size={13} /></HeadIcon>
          </PaneHead>
          <BackRow>
            <svg width="17" height="17" viewBox="0 0 17 17" fill="none" stroke="#666" strokeWidth="1.2">
              <circle cx="8.5" cy="8.5" r="7.5" />
              <path d="M13 8.5 H4.5 M8 5 L4.5 8.5 L8 12" />
            </svg>
            <DivideTitle>
              <svg width="14" height="14" viewBox="0 0 14 14" fill="#d8ecd5" stroke="#5f8f5f">
                <path d="M1 5 H13 V13 H1 Z M5 5 V13 M9 5 V13" />
                <circle cx="7" cy="2" r="1.3" fill="#5f8f5f" />
              </svg>
              Divide
            </DivideTitle>
          </BackRow>
          <InfoBar>
            <svg width="12" height="12" viewBox="0 0 12 12">
              <circle cx="6" cy="6" r="6" fill="#4f9fd4" />
              <path d="M6 2.5 V4 M6 5.2 V9.6" stroke="#fff" strokeWidth="1.7" />
            </svg>
            <InfoText>Select line feature(s) or a polygon feature to divide.</InfoText>
            <InfoClose><X size={13} /></InfoClose>
          </InfoBar>
          <SelectBar>
            <svg width="24" height="24" viewBox="0 0 24 24">
              <path d="M9 1 H23 V14 H12 Z" fill="#dff0f7" stroke="#666" />
              <path d="M15 1 L17 7 L18 14 M23 4 L17 7" fill="none" stroke="#666" />
              <path d="M2 9 V23 L6 19.5 L9 24 L11 23 L8.5 18.5 L13 18 Z" fill="#4a4a4a" />
            </svg>
            <SelectText>Change the selection.</SelectText>
            <ChevronDown size={13} strokeWidth={2.2} color="#333" />
          </SelectBar>
          <FeatureList>
            <ListRow>
              <TreeArrow />
              TERRENO (4)
            </ListRow>
            <ListRow $child>0</ListRow>
            <ListRow $child>0</ListRow>
            <ListRow $child>0</ListRow>
            <ListRow $child>0</ListRow>
          </FeatureList>
          <Footer>
            <PreviewRow>
              <Check><Check2 /></Check>
              Show Preview
            </PreviewRow>
            <DivideButton>Divide</DivideButton>
          </Footer>
        </ModifyPane>
        <DockTabs>
          <DockTab $w={46}>Catalog</DockTab>
          <DockTab $w={53} $active $pl={3}>Modif...</DockTab>
          <DockTab $w={58} $pl={7}>Symb...</DockTab>
          <DockTab $w={52}>Label...</DockTab>
          <DockTab $w={53}>Geopr...</DockTab>
          <DockTab $w={46}>Create...</DockTab>
        </DockTabs>
      </ModifyColumn>
    </Main>

    <Taskbar>
      <StartButton>
        <svg width="16" height="16" viewBox="0 0 16 16" fill="#fff">
          <path d="M0 2.5 L7 1.4 V7.5 H0 Z M8 1.2 L16 0 V7.5 H8 Z M0 8.5 H7 V14.6 L0 13.5 Z M8 8.5 H16 V16 L8 14.8 Z" />
        </svg>
      </StartButton>
      <TaskIcon>
        <svg width="22" height="22" viewBox="0 0 22 22" fill="none">
          <circle cx="11" cy="11" r="11" fill="#2a57b8" />
          <circle cx="11" cy="12" r="5" stroke="#fff" strokeWidth="2" />
          <path d="M11 5 V12" stroke="#fff" strokeWidth="2" />
        </svg>
      </TaskIcon>
      <TaskIcon>
        <svg width="22" height="18" viewBox="0 0 22 18">
          <path d="M0 0 H9 L11 2 H22 V18 H0 Z" fill="#f2cc5e" />
          <rect x="0" y="5" width="22" height="3" fill="#e8b93f" />
          <rect x="7" y="11" width="8" height="7" fill="#7aa7b5" />
        </svg>
      </TaskIcon>
      <TaskIcon>
        <svg width="24" height="24" viewBox="0 0 24 24">
          <path d="M1 23 L3 16 A11 11 0 1 1 8 21 Z" fill="#3fcf5f" />
          <path d="M8 7 L10 6.5 L11 9.5 L9.8 10.8 C10.5 12.5 11.8 13.8 13.3 14.3 L14.6 13 L17.5 14.5 L17 16.5 C14 18 6 12 8 7 Z" fill="#fff" />
        </svg>
      </TaskIcon>
      <TaskIcon>
        <svg width="24" height="22" viewBox="0 0 24 22" fill="none">
          <ellipse cx="11" cy="8" rx="10" ry="5.5" fill="#d8d0cc" transform="rotate(-25 11 8)" />
          <path d="M5 4 L15 12" stroke="#b35a5a" strokeWidth="1.5" />
          <path d="M11 5 L16 14 M20 6 L15 14" stroke="#3f8fb5" strokeWidth="1.6" />
          <circle cx="14" cy="18" r="2.6" stroke="#3f8fb5" strokeWidth="1.6" />
          <circle cx="20" cy="17" r="2.6" stroke="#3f8fb5" strokeWidth="1.6" />
        </svg>
      </TaskIcon>
      <TaskIcon>
        <svg width="23" height="23" viewBox="0 0 24 24">
          <path d="M12 12 L22.4 6 A12 12 0 0 0 2 5.3 L7 14 Z" fill="#dd4b3e" />
          <path d="M7 14 L2 5.3 A12 12 0 0 0 10.5 23.9 L15.5 15 Z" fill="#2fa04f" />
          <path d="M12 6.8 H22.4 A12 12 0 0 1 10.5 23.9 L16.5 14.6 Z" fill="#f3c33c" />
          <circle cx="12" cy="12" r="5.5" fill="#fff" />
          <circle cx="12" cy="12" r="4.3" fill="#4a8be8" />
        </svg>
      </TaskIcon>
      <TaskIcon $active>
        <svg width="20" height="22" viewBox="0 0 20 22">
          <path d="M10 0 L20 5.5 V16.5 L10 22 L0 16.5 V5.5 Z" fill="#2f7fc4" />
          <circle cx="10" cy="11" r="6.5" fill="#fff" />
          <path d="M6 8 L11 6 L12 10 L9 11 L11 15 L8 14 Z" fill="#2f7fc4" />
        </svg>
      </TaskIcon>
      <TaskIcon>
        <svg width="20" height="18" viewBox="0 0 20 18">
          <path d="M1 6 C1 1 4 0 10 0 C16 0 19 2 19 7 C19 14 15 18 10 18 C5 18 1 13 1 6 Z" fill="#d86a2a" />
          <path d="M5 3 V8 M8 2 V8 M12 2 V8 M15 3 V8" stroke="#4a2210" strokeWidth="1.2" />
          <path d="M4 8 C7 10 13 10 16 8" stroke="#f5b98c" strokeWidth="1.4" fill="none" />
        </svg>
      </TaskIcon>
      <Tray>
        <TrayIcon><ChevronUp size={15} strokeWidth={1.4} /></TrayIcon>
        <TrayIcon>
          <svg width="14" height="16" viewBox="0 0 14 16" fill="none" stroke="#ddd">
            <path d="M3 1 H9 M3 15 H9" />
            <path d="M2 5 H9 V11 H2 Z M9 7 L13 5 V11 L9 9" />
          </svg>
        </TrayIcon>
        <TrayIcon>
          <svg width="12" height="18" viewBox="0 0 12 18">
            <rect x="3" y="0" width="6" height="12" rx="3" fill="#e8e8e8" />
            <path d="M1 8 C1 15 11 15 11 8 M6 14 V18" stroke="#ddd" fill="none" />
          </svg>
        </TrayIcon>
        <TrayIcon>
          <svg width="15" height="10" viewBox="0 0 15 10" fill="none" stroke="#ddd">
            <path d="M.5 .5 H13 V9.5 H.5 Z" />
            <rect x="2" y="2" width="6" height="6" fill="#ddd" stroke="none" />
            <path d="M14.5 3 V7" />
          </svg>
        </TrayIcon>
        <TrayIcon>
          <svg width="16" height="16" viewBox="0 0 16 16" fill="none" stroke="#ddd">
            <circle cx="7.5" cy="7.5" r="7" />
            <ellipse cx="7.5" cy="7.5" rx="3" ry="7" />
            <path d="M.5 5 H14.5 M.5 10 H14.5" />
            <circle cx="12" cy="12" r="3" fill="#191919" />
            <path d="M10.5 13.5 L13.5 10.5" />
          </svg>
        </TrayIcon>
        <TrayIcon>
          <svg width="16" height="14" viewBox="0 0 16 14" fill="none" stroke="#ddd">
            <path d="M1 5 H3.5 L7 2 V12 L3.5 9 H1 Z" />
            <path d="M9.5 5 C10.5 6 10.5 8 9.5 9 M12 3 C14 5 14 9 12 11" />
          </svg>
        </TrayIcon>
        <Lang>ESP</Lang>
        <Clock>
          14:53
          <br />
          23/05/2023
        </Clock>
        <NotifyIcon>
          <svg width="15" height="14" viewBox="0 0 15 14" fill="none" stroke="#e4e4e4">
            <path d="M.5 .5 H14.5 V10.5 H9.5 L7.5 13 L5.5 10.5 H.5 Z" />
          </svg>
        </NotifyIcon>
      </Tray>
    </Taskbar>
  </Page>
)

export default App
